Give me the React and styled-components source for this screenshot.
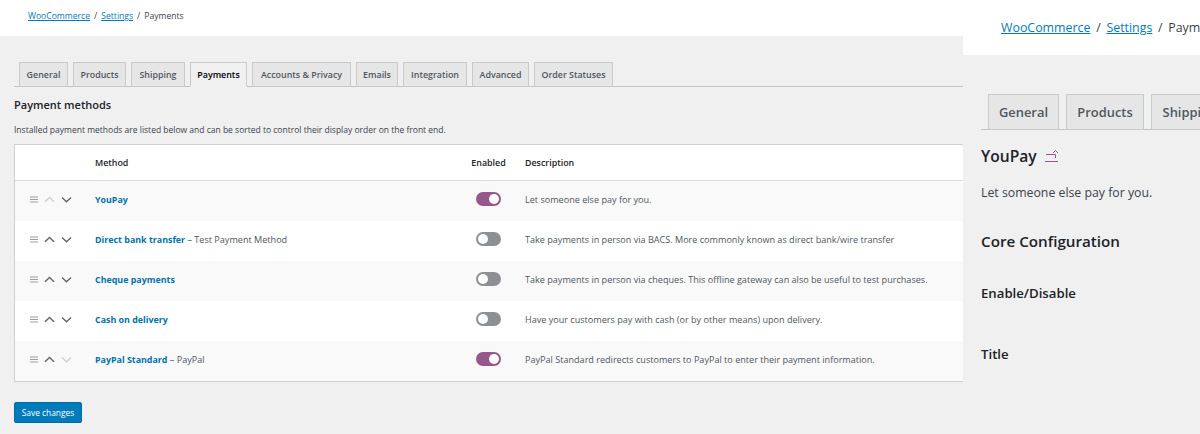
import React from 'react';
import styled, { createGlobalStyle } from 'styled-components';

const Global = createGlobalStyle`
  html, body { margin: 0; padding: 0; background: #f0f0f1; }
  body { font-family: "Open Sans", "Noto Sans", "Liberation Sans", sans-serif; overflow: hidden; }
`;
const Page = styled.div`display: flex; width: 1200px; height: 434px; overflow: hidden; background: #f0f0f1;`;
const LeftPanel = styled.section`width: 963px; flex: none; overflow: hidden;`;
const RightPanel = styled.section`flex: 1; min-width: 0; overflow: hidden;`;

const TopBar = styled.div`
  height: ${p => p.$large ? 55 : 36}px;
  background: #fff;
  display: flex;
  align-items: ${p => p.$large ? 'center' : 'flex-start'};
  box-sizing: border-box;
  padding: ${p => p.$large ? '0 0 0 38px' : '11px 0 0 28px'};
  font-size: ${p => p.$large ? 12.4 : 8.6}px;
  line-height: ${p => p.$large ? '17px' : '11px'};
  color: #3c434a;
  white-space: nowrap;
`;
const Crumb = styled.a`color: #007cba; text-decoration: underline;`;
const Sep = styled.span`margin: 0 ${p => p.$large ? 5.7 : 4}px;`;

const TabRow = styled.div`
  display: flex;
  gap: ${p => p.$large ? 7 : 5}px;
  margin: ${p => p.$large ? '39px 0 0 18px' : '26px 0 0 14px'};
  padding-left: ${p => p.$large ? 7 : 5}px;
  height: ${p => p.$large ? 35 : 24}px;
  border-bottom: 1px solid #c3c4c7;
  white-space: nowrap;
`;
const Tab = styled.div`
  box-sizing: border-box;
  height: ${p => p.$large ? 36 : 25}px;
  width: ${p => p.$w}px;
  flex: none;
  display: flex;
  align-items: center;
  justify-content: center;
  font-size: ${p => p.$large ? 12.9 : 8.9}px;
  font-weight: 600;
  color: ${p => p.$active ? '#000' : '#50575e'};
  background: ${p => p.$active ? '#f0f0f1' : '#e6e6e6'};
  border: 1px solid #c9cacc;
  border-bottom-color: ${p => p.$active ? '#f0f0f1' : '#c9cacc'};
`;
const Content = styled.div`padding-left: ${p => p.$large ? 18 : 14}px;`;
const LeftHead = styled.h2`
  margin: 10px 0 0;
  font-size: 11px;
  line-height: 16px;
  font-weight: 560;
  color: #1d2327;
`;
const LeftIntro = styled.p`
  margin: 11px 0 0;
  font-size: 8.5px;
  line-height: 12px;
  color: #3c434a;
`;
const MethodTable = styled.div`
  margin-top: 8px;
  width: 960px;
  box-sizing: border-box;
  background: #fff;
  border: 1px solid #ccd0d4;
  border-right: none;
`;
const grid = `
  display: grid;
  grid-template-columns: 80px 357px 73px 1fr;
  align-items: center;
`;
const HeaderRow = styled.div`
  ${grid}
  height: 36px;
  box-sizing: border-box;
  border-bottom: 1px solid #dcdcde;
  font-size: 8.9px;
  font-weight: 600;
  color: #1d2327;
`;
const Row = styled.div`
  ${grid}
  height: 40px;
  box-sizing: border-box;
  padding-bottom: 4px;
  background: ${p => p.$odd ? '#f9f9f9' : '#fff'};
  font-size: 9.08px;
  color: #50575e;
  white-space: nowrap;
`;
const Centered = styled.div`text-align: center;`;
const Sort = styled.div`display: flex; align-items: center; padding-left: 15px; gap: 6px; color: #50575e;`;
const Glyph = styled.svg`display: block; flex: none; width: ${p => p.$w}px; height: 9px; color: ${p => p.$off ? '#d0d0d0' : '#5f666c'};`;
const MethodName = styled.a`font-weight: 700; color: #0073aa; font-size: 8.9px;`;
const Toggle = styled.span`
  display: flex;
  box-sizing: border-box;
  width: 25px;
  height: 14px;
  margin: 0 auto;
  border-radius: 7px;
  padding: 2px 2px;
  justify-content: ${p => p.$on ? 'flex-end' : 'flex-start'};
  background: ${p => p.$on ? '#96588a' : '#8c8f94'};
  &::after { content: ""; width: 10px; height: 10px; border-radius: 50%; background: #fff; }
`;
const Save = styled.div`
  margin-top: 20px;
  width: 68px;
  height: 21px;
  box-sizing: border-box;
  background: #007cba;
  border: 1px solid #006ba1;
  border-radius: 2px;
  color: #fff;
  font-size: 8.4px;
  display: flex;
  align-items: center;
  justify-content: center;
`;
const RightHead = styled.h2`
  margin: 16px 0 0;
  display: flex;
  align-items: center;
  gap: 8px;
  font-size: 15.6px;
  line-height: 20px;
  font-weight: 560;
  color: #1d2327;
`;
const RightIntro = styled.p`margin: 17px 0 0; font-size: 12.3px; line-height: 20px; color: #3c434a;`;
const Section = styled.h3`margin: 27px 0 0; font-size: 15.2px; line-height: 22px; font-weight: 560; color: #1d2327;`;
const Field = styled.div`margin-top: ${p => p.$gap}px; font-size: 13.2px; line-height: 18px; font-weight: 560; color: #1d2327;`;

const Handle = () => (
  <Glyph $w={8} viewBox="0 0 8 9" fill="none" stroke="#9a9da1" strokeWidth="1">
    <path d="M0 2h8M0 4.5h8M0 7h8" />
  </Glyph>
);
const Chevron = ({ up, off }) => (
  <Glyph $w={11} $off={off} viewBox="0 0 11 9" fill="none" stroke="currentColor" strokeWidth="1.4">
    <path d={up ? 'M1 6.8L5.5 2.4L10 6.8' : 'M1 2.4L5.5 6.8L10 2.4'} />
  </Glyph>
);

const leftTabs = [['General', 49], ['Products', 53], ['Shipping', 54], ['Payments', 57, true], ['Accounts & Privacy', 99], ['Emails', 42], ['Integration', 64], ['Advanced', 57], ['Order Statuses', 79]];
const rightTabs = [['General', 71], ['Products', 78], ['Shipping', 77]];
const methods = [
  { name: 'YouPay', desc: 'Let someone else pay for you.', on: true, upOff: true },
  { name: 'Direct bank transfer', sub: 'Test Payment Method', desc: 'Take payments in person via BACS. More commonly known as direct bank/wire transfer' },
  { name: 'Cheque payments', desc: 'Take payments in person via cheques. This offline gateway can also be useful to test purchases.' },
  { name: 'Cash on delivery', desc: 'Have your customers pay with cash (or by other means) upon delivery.' },
  { name: 'PayPal Standard', sub: 'PayPal', desc: 'PayPal Standard redirects customers to PayPal to enter their payment information.', on: true, downOff: true },
];

export default function App() {
  return (
    <Page>
      <Global />
      <LeftPanel>
        <TopBar>
          <Crumb>WooCommerce</Crumb><Sep>/</Sep><Crumb>Settings</Crumb><Sep>/</Sep>Payments
        </TopBar>
        <TabRow>
          {leftTabs.map(([t, w, a]) => <Tab key={t} $w={w} $active={a}>{t}</Tab>)}
        </TabRow>
        <Content>
          <LeftHead>Payment methods</LeftHead>
          <LeftIntro>Installed payment methods are listed below and can be sorted to control their display order on the front end.</LeftIntro>
          <MethodTable>
            <HeaderRow>
              <span /><span>Method</span><Centered>Enabled</Centered><span>Description</span>
            </HeaderRow>
            {methods.map((m, i) => (
              <Row key={m.name} $odd={i % 2 === 0}>
                <Sort><Handle /><Chevron up off={m.upOff} /><Chevron off={m.downOff} /></Sort>
                <div><MethodName>{m.name}</MethodName>{m.sub ? ` – ${m.sub}` : ''}</div>
                <Toggle $on={m.on} />
                <span>{m.desc}</span>
              </Row>
            ))}
          </MethodTable>
          <Save>Save changes</Save>
        </Content>
      </LeftPanel>
      <RightPanel>
        <TopBar $large>
          <Crumb>WooCommerce</Crumb><Sep $large>/</Sep><Crumb>Settings</Crumb><Sep $large>/</Sep>Payments
        </TopBar>
        <TabRow $large>
          {rightTabs.map(([t, w]) => <Tab key={t} $large $w={w}>{t}</Tab>)}
        </TabRow>
        <Content $large>
          <RightHead>
            YouPay
            <svg width="14" height="12" viewBox="0 0 14 12" fill="none" stroke="#96588a" strokeWidth="1">
              <path d="M0 11.5h13M1 4.5h9.5V8M8 3L10.5 0.5L13 3" />
            </svg>
          </RightHead>
          <RightIntro>Let someone else pay for you.</RightIntro>
          <Section>Core Configuration</Section>
          <Field $gap={32}>Enable/Disable</Field>
          <Field $gap={43}>Title</Field>
        </Content>
      </RightPanel>
    </Page>
  );
}
